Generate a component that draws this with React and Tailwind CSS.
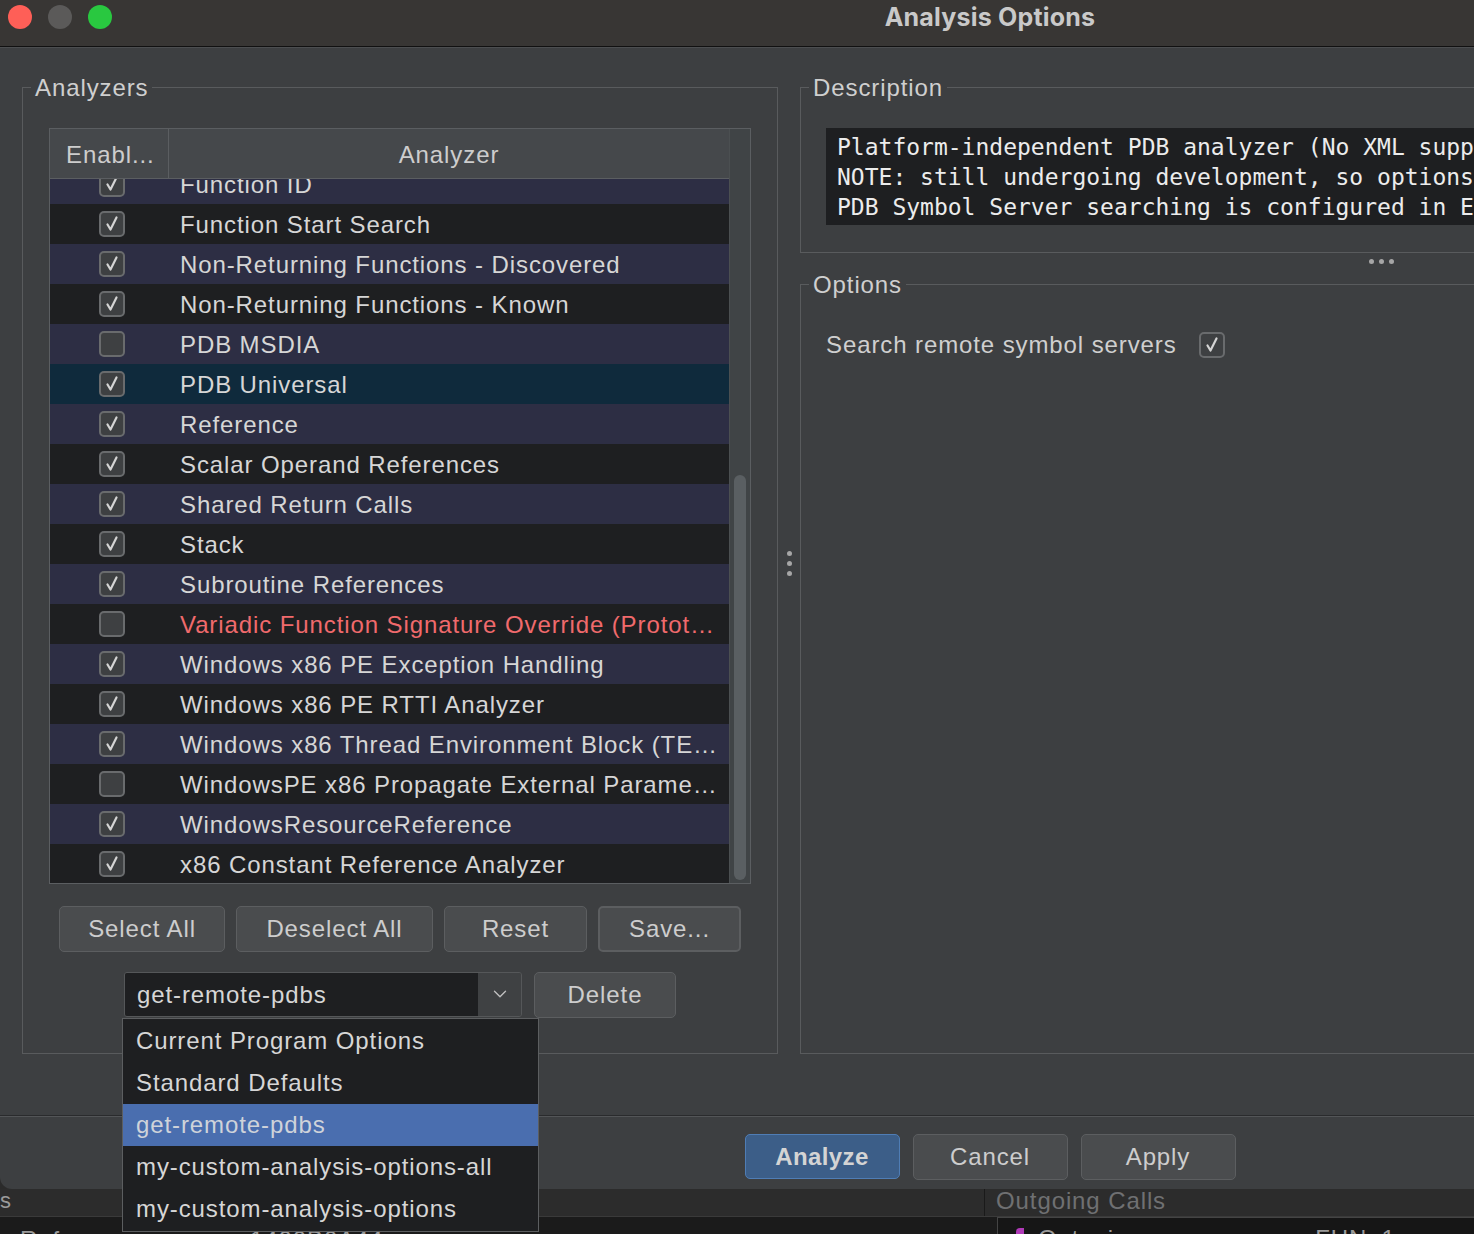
import { ChevronDown } from 'lucide-react';

const ROWS = [
  { name: 'Function ID', on: true },
  { name: 'Function Start Search', on: true },
  { name: 'Non-Returning Functions - Discovered', on: true },
  { name: 'Non-Returning Functions - Known', on: true },
  { name: 'PDB MSDIA', on: false },
  { name: 'PDB Universal', on: true, selected: true },
  { name: 'Reference', on: true },
  { name: 'Scalar Operand References', on: true },
  { name: 'Shared Return Calls', on: true },
  { name: 'Stack', on: true },
  { name: 'Subroutine References', on: true },
  { name: 'Variadic Function Signature Override (Prototype)', on: false, warn: true },
  { name: 'Windows x86 PE Exception Handling', on: true },
  { name: 'Windows x86 PE RTTI Analyzer', on: true },
  { name: 'Windows x86 Thread Environment Block (TEB) Analyzer', on: true },
  { name: 'WindowsPE x86 Propagate External Parameters', on: false },
  { name: 'WindowsResourceReference', on: true },
  { name: 'x86 Constant Reference Analyzer', on: true },
];

const PROFILES = [
  'Current Program Options',
  'Standard Defaults',
  'get-remote-pdbs',
  'my-custom-analysis-options-all',
  'my-custom-analysis-options',
];

const UI = { fontFamily: '"Liberation Sans", Arial, sans-serif' };

function Check({ on }) {
  return (
    <svg width={26} height={26} viewBox="0 0 26 26">
      <rect x={1} y={1} width={24} height={24} rx={4} fill="#3e4042" stroke="#696b6d" strokeWidth={2} />
      {on && (
        <path d="M8.5 13.5 L11.5 18.5 L17.5 6.5" fill="none" stroke="#d4d4d4" strokeWidth={2.2}
              strokeLinecap="round" strokeLinejoin="round" />
      )}
    </svg>
  );
}

function Btn({ children, className = '' }) {
  return (
    <button className={`h-[46px] rounded-[5px] border border-[#5c5e60] bg-[#4a4c4e] text-[24px] text-[#cdcdcd] ${className}`}>
      {children}
    </button>
  );
}

function Legend({ children }) {
  return <legend className="ml-[8px] px-[4px] text-[24px] leading-[28px] text-[#cfcfcf]">{children}</legend>;
}

function Dots({ vertical }) {
  return (
    <div className={`flex items-center justify-center gap-[5px] ${vertical ? 'flex-col w-[22px] shrink-0' : 'h-[18px]'}`}>
      <span className="w-[5px] h-[5px] rounded-full bg-[#a6a6a6]" />
      <span className="w-[5px] h-[5px] rounded-full bg-[#a6a6a6]" />
      <span className="w-[5px] h-[5px] rounded-full bg-[#a6a6a6]" />
    </div>
  );
}

export default function App() {
  return (
    <div className="relative w-[1474px] h-[1234px] overflow-hidden bg-[#2b2b2b] tracking-[0.9px]" style={UI}>

      {/* Dialog */}
      <div className="w-[1980px] h-[1189px] flex flex-col bg-[#3d3f41] rounded-bl-[12px] overflow-hidden">

        {/* Title bar */}
        <div className="h-[46px] flex items-start pt-[5px] bg-[#383634] relative">
          <div className="flex items-center gap-[16px] pl-[8px]">
            <span className="w-[24px] h-[24px] rounded-full bg-[#fe5f57]" />
            <span className="w-[24px] h-[24px] rounded-full bg-[#5b5a59]" />
            <span className="w-[24px] h-[24px] rounded-full bg-[#29c840]" />
          </div>
          <div className="absolute inset-x-0 top-0 h-[35px] flex items-center justify-center text-[25px] font-bold tracking-[0.2px] text-[#c9c9c9]"
               style={{ fontFamily: 'Inter, "Liberation Sans", sans-serif' }}>
            Analysis Options
          </div>
        </div>
        <div className="h-[1px] bg-[#111111]" />
        <div className="h-[1px] bg-[#4c4e50]" />

        {/* Main */}
        <div className="flex-1 flex pt-[26px] pb-[61px] pl-[22px] pr-[18px]">

          {/* Analyzers */}
          <fieldset className="w-[756px] min-w-0 shrink-0 border border-[#595b5d]">
            <Legend>Analyzers</Legend>
            <div className="flex flex-col px-[26px]">

              <div className="mt-[26px] flex h-[756px] border border-[#5b5e61]">
                <div className="flex-1 flex flex-col min-w-0">
                  <div className="h-[50px] shrink-0 flex bg-[#45484b] border-b border-[#5b5e61] text-[24px] text-[#cdcdcd] pt-[3px]">
                    <div className="w-[119px] border-r border-[#5b5e61] -mt-[3px] pt-[3px] flex items-center pl-[16px]">Enabl...</div>
                    <div className="flex-1 flex items-center justify-center">Analyzer</div>
                  </div>
                  <div className="flex-1 overflow-hidden">
                    <div className="-mt-[15px]">
                      {ROWS.map((r, i) => (
                        <div key={r.name}
                             className={`h-[40px] flex items-center ${r.selected ? 'bg-[#0f2a3c]' : i % 2 === 0 ? 'bg-[#2d2e44]' : 'bg-[#1e1f21]'}`}>
                          <div className="w-[120px] shrink-0 flex justify-center pl-[4px]">
                            <Check on={r.on} />
                          </div>
                          <div className={`flex-1 min-w-0 truncate pl-[10px] pr-[8px] pt-[2px] text-[24px] ${r.warn ? 'text-[#f06a6c]' : 'text-[#d6d6d6]'}`}>
                            {r.name}
                          </div>
                        </div>
                      ))}
                    </div>
                  </div>
                </div>
                <div className="w-[21px] shrink-0 bg-[#404446] border-l border-[#4b4f51]">
                  <div className="mt-[346px] ml-[4px] w-[12px] h-[405px] rounded-full bg-[#5a5f62]" />
                </div>
              </div>

              <div className="mt-[22px] flex gap-[11px] pl-[10px]">
                <Btn className="w-[166px]">Select All</Btn>
                <Btn className="w-[197px]">Deselect All</Btn>
                <Btn className="w-[143px]">Reset</Btn>
                <Btn className="w-[143px] border-2 border-[#4a7bbd]">Save...</Btn>
              </div>

              <div className="mt-[20px] mb-[35px] flex justify-center gap-[12px]">
                <div className="w-[398px] h-[45px] flex border border-[#555759] rounded-[3px] overflow-hidden">
                  <div className="flex-1 bg-[#1e1f21] flex items-center pl-[12px] pt-[1px] text-[24px] text-[#d6d6d6]">get-remote-pdbs</div>
                  <div className="w-[43px] bg-[#3f4143] flex items-center justify-center text-[#bdbdbd]">
                    <ChevronDown size={22} strokeWidth={1.5} />
                  </div>
                </div>
                <Btn className="w-[142px] h-[45px]">Delete</Btn>
              </div>
            </div>
          </fieldset>

          <Dots vertical />

          {/* Right pane */}
          <div className="flex-1 min-w-0 flex flex-col">
            <fieldset className="min-w-0 border border-[#595b5d]">
              <Legend>Description</Legend>
              <div className="px-[25px] pb-[27px]">
                <div className="mt-[26px] h-[97px] bg-[#1e1f21] pl-[11px] pt-[4px] text-[23px] leading-[30px] tracking-normal text-[#ececec] whitespace-nowrap overflow-hidden"
                     style={{ fontFamily: '"DejaVu Sans Mono", "Liberation Mono", monospace' }}>
                  <div>Platform-independent PDB analyzer (No XML support).</div>
                  <div>NOTE: still undergoing development, so options may change.</div>
                  <div>PDB Symbol Server searching is configured in Edit -&gt; Symbol Server Config.</div>
                </div>
              </div>
            </fieldset>

            <Dots />

            <fieldset className="flex-1 min-w-0 border border-[#595b5d]">
              <Legend>Options</Legend>
              <div className="px-[25px] mt-[32px] flex items-center gap-[22px] h-[28px]">
                <span className="text-[24px] text-[#cfcfcf]">Search remote symbol servers</span>
                <Check on />
              </div>
            </fieldset>
          </div>
        </div>

        {/* Bottom bar */}
        <div className="h-[75px] border-t border-[#2a2b2d] shadow-[inset_0_1px_0_#535557] flex items-center justify-center gap-[13px] pt-[9px]">
          <button className="w-[155px] h-[45px] rounded-[5px] border border-[#4f7db5] bg-[#3c5e88] text-[24px] font-bold tracking-[0.4px] text-[#d4d4d4]">Analyze</button>
          <Btn className="w-[155px] h-[45px]">Cancel</Btn>
          <Btn className="w-[155px] h-[45px]">Apply</Btn>
        </div>
      </div>

      {/* Main tool window behind the dialog */}
      <div className="h-[45px] flex flex-col bg-[#2c2c2c]">
        <div className="h-[27px] flex">
          <div className="w-[985px] text-[22px] leading-[24px] text-[#9a9a9a] border-r border-[#1a1a1a]">s</div>
          <div className="pl-[11px] text-[24px] leading-[24px] text-[#6f7072]">Outgoing Calls</div>
        </div>
        <div className="flex-1 flex bg-[#1b1b1b] border-t border-[#3a3a3a] overflow-hidden">
          <div className="w-[985px] flex pl-[20px] pt-[8px] text-[24px] leading-[30px] text-[#9a9a9a]">
            <span>Ref</span>
            <span className="ml-[190px]">1400B0A44</span>
          </div>
          <div className="flex-1 ml-[12px] border-l border-t border-[#444444] bg-[#161616] flex pl-[18px] gap-[14px] pt-[6px] text-[24px] leading-[30px] text-[#9a9a9a]">
            <span className="w-[8px] h-[14px] mt-[4px] bg-[#b03ab8] rounded-tl-[4px]" />
            <span>Outgoing References</span>
            <span className="ml-[20px]">FUN_1 00147</span>
          </div>
        </div>
      </div>

      {/* Open profile combo popup */}
      <div className="absolute left-[122px] top-[1018px] w-[417px] h-[214px] border border-[#5c5e60] bg-[#1e1f21] pt-[1px]">
        {PROFILES.map(p => (
          <div key={p}
               className={`h-[42px] flex items-center pl-[13px] text-[24px] ${p === 'get-remote-pdbs' ? 'bg-[#4a6eaf] text-[#cfd3da]' : 'text-[#d6d6d6]'}`}>
            {p}
          </div>
        ))}
      </div>
    </div>
  );
}
